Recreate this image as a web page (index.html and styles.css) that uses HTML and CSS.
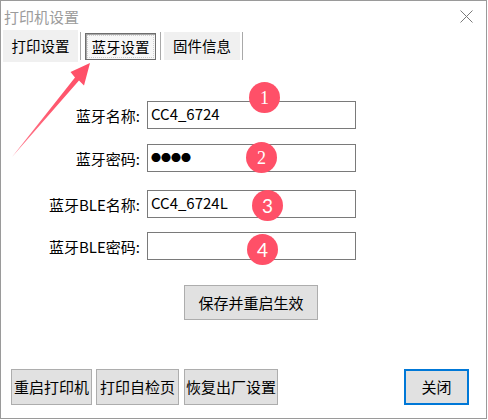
FILE: index.html
```html
<!DOCTYPE html>
<html lang="zh">
<head>
<meta charset="utf-8">
<link rel="stylesheet" href="styles.css">
</head>
<body>
<div class="window">
  <div class="titlebar">
    <span class="title">打印机设置</span>
    <svg class="close" width="13" height="13" viewBox="0 0 13 13"><path d="M0.5 0.5 L12.5 12.5 M12.5 0.5 L0.5 12.5" stroke="#7a7a7a" stroke-width="1" fill="none"/></svg>
  </div>
  <div class="tabs">
    <div class="tab t1">打印设置</div>
    <div class="sep s1"></div>
    <div class="tab active">蓝牙设置</div>
    <div class="sep s2"></div>
    <div class="tab t3">固件信息</div>
    <div class="sep s3"></div>
  </div>
  <div class="form">
    <div class="row r1"><span class="label">蓝牙名称:</span><div class="field">CC4_6724<span class="badge serif b1">1</span></div></div>
    <div class="row r2"><span class="label">蓝牙密码:</span><div class="field dots">●●●●<span class="badge serif b2">2</span></div></div>
    <div class="row r3"><span class="label">蓝牙BLE名称:</span><div class="field">CC4_6724L<span class="badge sans b3">3</span></div></div>
    <div class="row r4"><span class="label">蓝牙BLE密码:</span><div class="field"><span class="badge sans b4">4</span></div></div>
  </div>
  <div class="save-wrap"><div class="btn save">保存并重启生效</div></div>
  <div class="footer">
    <div class="btn f1">重启打印机</div>
    <div class="btn f2">打印自检页</div>
    <div class="btn f3">恢复出厂设置</div>
    <div class="btn closebtn">关闭</div>
  </div>
  <svg class="arrow" width="100" height="170" viewBox="0 0 100 170">
    <defs>
      <linearGradient id="ag" x1="12" y1="157" x2="90" y2="63" gradientUnits="userSpaceOnUse">
        <stop offset="0" stop-color="#ff7f92"/>
        <stop offset="0.5" stop-color="#ff5a70"/>
        <stop offset="1" stop-color="#ff4d66"/>
      </linearGradient>
    </defs>
    <polygon points="12,157 75,77.5 70.5,72 90,63 84,85.5 79,80.5" fill="url(#ag)"/>
  </svg>
</div>
</body>
</html>
```
FILE: styles.css
```css
html, body {
  margin: 0;
  padding: 0;
  background: #ffffff;
}
body {
  font-family: "Noto Sans CJK SC", "Noto Sans", sans-serif;
  color: #000;
}
.window {
  position: relative;
  width: 485px;
  height: 417px;
  border: 1px solid #9a9a9a;
  background: #fff;
  display: flex;
  flex-direction: column;
  overflow: hidden;
}
.titlebar {
  height: 29px;
  display: flex;
  align-items: center;
  justify-content: space-between;
  padding-left: 3px;
  padding-right: 13px;
}
.title {
  font-size: 15px;
  line-height: 20px;
  color: #9c9c9c;
  margin-top: 2px;
}
.close {
  display: block;
  margin-top: 2px;
}
.tabs {
  height: 32px;
  display: flex;
  align-items: center;
  padding-left: 2px;
}
.tab {
  font-size: 14.5px;
  line-height: 20px;
  display: flex;
  align-items: center;
  justify-content: center;
  box-sizing: border-box;
}
.t1 {
  width: 75px;
  height: 32px;
  background: #f0f0f0;
}
.active {
  width: 71px;
  height: 27px;
  margin-left: 4px;
  border: 1px solid #6e6e6e;
  box-shadow: inset 1px 1px 0 #a8a8a8;
  background: #f7f7f7;
  outline: 1px dotted #cfcfcf;
  outline-offset: -3px;
  padding-top: 1px;
}
.t3 {
  width: 76px;
  height: 28px;
  margin-left: 3px;
  background: #f0f0f0;
}
.sep {
  width: 1px;
  height: 28px;
  background: #a9a9a9;
}
.s1 { margin-left: 2px; }
.s2 { margin-left: 4px; }
.s3 { margin-left: 2px; }
.form {
  margin-top: 39px;
  display: flex;
  flex-direction: column;
}
.row {
  display: grid;
  grid-template-columns: 139px 209px;
  column-gap: 7px;
  align-items: center;
  height: 28px;
}
.r2 { margin-top: 15px; }
.r3 { margin-top: 18px; }
.r4 { margin-top: 14px; }
.label {
  text-align: right;
  font-size: 15px;
  line-height: 20px;
  padding-top: 1px;
}
.field {
  position: relative;
  box-sizing: border-box;
  height: 28px;
  border: 1px solid #7a7a7a;
  background: #fff;
  font-size: 15px;
  line-height: 24px;
  padding-left: 3px;
}
.dots {
  font-size: 10px;
  letter-spacing: 0;
  line-height: 25px;
}
.badge {
  position: absolute;
  width: 31px;
  height: 31px;
  border-radius: 50%;
  background: #ff5068;
  color: #fff;
  display: flex;
  align-items: center;
  justify-content: center;
  line-height: 1;
  letter-spacing: 0;
}
.serif {
  font-family: "Liberation Serif", "DejaVu Serif", serif;
  font-size: 18px;
}
.sans {
  font-family: "Lato", "Noto Sans", sans-serif;
  font-size: 19px;
}
.b1 { left: 101px; top: -20px; }
.b2 { left: 98px; top: -3px; }
.b3 { left: 104px; top: -1px; }
.b4 { left: 99px; top: 1px; }
.btn {
  box-sizing: border-box;
  background: #e1e1e1;
  border: 1px solid #adadad;
  font-size: 15px;
  line-height: 20px;
  display: flex;
  align-items: center;
  justify-content: center;
  white-space: nowrap;
}
.save-wrap {
  margin-top: 25px;
  padding-left: 183px;
  display: flex;
}
.save {
  width: 134px;
  height: 35px;
}
.footer {
  margin-top: 49px;
  display: flex;
  padding-left: 10px;
  padding-right: 17px;
}
.footer .btn {
  height: 36px;
}
.f1 { width: 81px; }
.f2 { width: 83px; margin-left: 4px; }
.f3 { width: 94px; margin-left: 5px; }
.closebtn {
  width: 65px;
  margin-left: auto;
  border: 2px solid #0078d7;
}
.arrow {
  position: absolute;
  left: -1px;
  top: -1px;
  pointer-events: none;
}
```
